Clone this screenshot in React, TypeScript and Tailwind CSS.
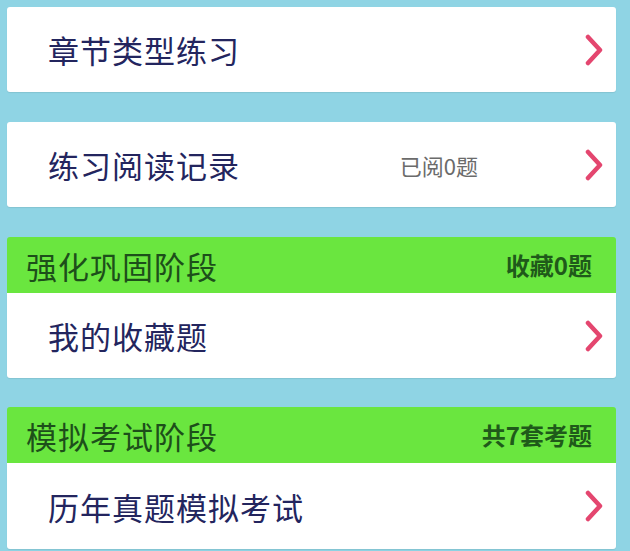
import React from "react";

const font = { fontFamily: '"Noto Sans CJK SC", "Noto Sans", sans-serif' };

function Chevron() {
  return (
    <svg width="20" height="32" viewBox="0 0 20 32" className="shrink-0">
      <path d="M4 3 L16 16 L4 29" fill="none" stroke="#e4466f" strokeWidth="4.5" strokeLinecap="round" strokeLinejoin="round" />
    </svg>
  );
}

function Card({ title, extra, h = "h-[85px]", rounded = "rounded-[3px]" }: { title: string; extra?: string; h?: string; rounded?: string }) {
  return (
    <div className={`${h} bg-white ${rounded} flex items-center pl-[41px] pr-[12px] shadow-[0_1px_1px_rgba(0,0,0,0.08)]`}>
      <span className="text-[31px] leading-none text-[#23255e] flex-1 tracking-[1px]">{title}</span>
      {extra && <span className="text-[22px] leading-none text-[#6b6b6b] mr-[106px]">{extra}</span>}
      <Chevron />
    </div>
  );
}

function Header({ title, extra }: { title: string; extra: string }) {
  return (
    <div className="h-[56px] bg-[#6ae63f] rounded-t-[3px] flex items-center pl-[19px] pr-[24px]">
      <span className="text-[31px] leading-none text-[#1d4f1a] flex-1 tracking-[1px]">{title}</span>
      <span className="text-[24px] leading-none font-bold text-[#1f5a1a]">{extra}</span>
    </div>
  );
}

export default function App() {
  return (
    <div className="w-[630px] h-[551px] bg-[#8fd4e4] pt-[7px] pl-[7px] pr-[14px] overflow-hidden" style={font}>
      <div className="flex flex-col">
        <Card title="章节类型练习" />
        <div className="h-[30px]" />
        <Card title="练习阅读记录" extra="已阅0题" />
        <div className="h-[30px]" />
        <Header title="强化巩固阶段" extra="收藏0题" />
        <Card title="我的收藏题" rounded="rounded-b-[3px]" />
        <div className="h-[29px]" />
        <Header title="模拟考试阶段" extra="共7套考题" />
        <Card title="历年真题模拟考试" h="h-[86px]" rounded="rounded-b-[3px]" />
      </div>
    </div>
  );
}
